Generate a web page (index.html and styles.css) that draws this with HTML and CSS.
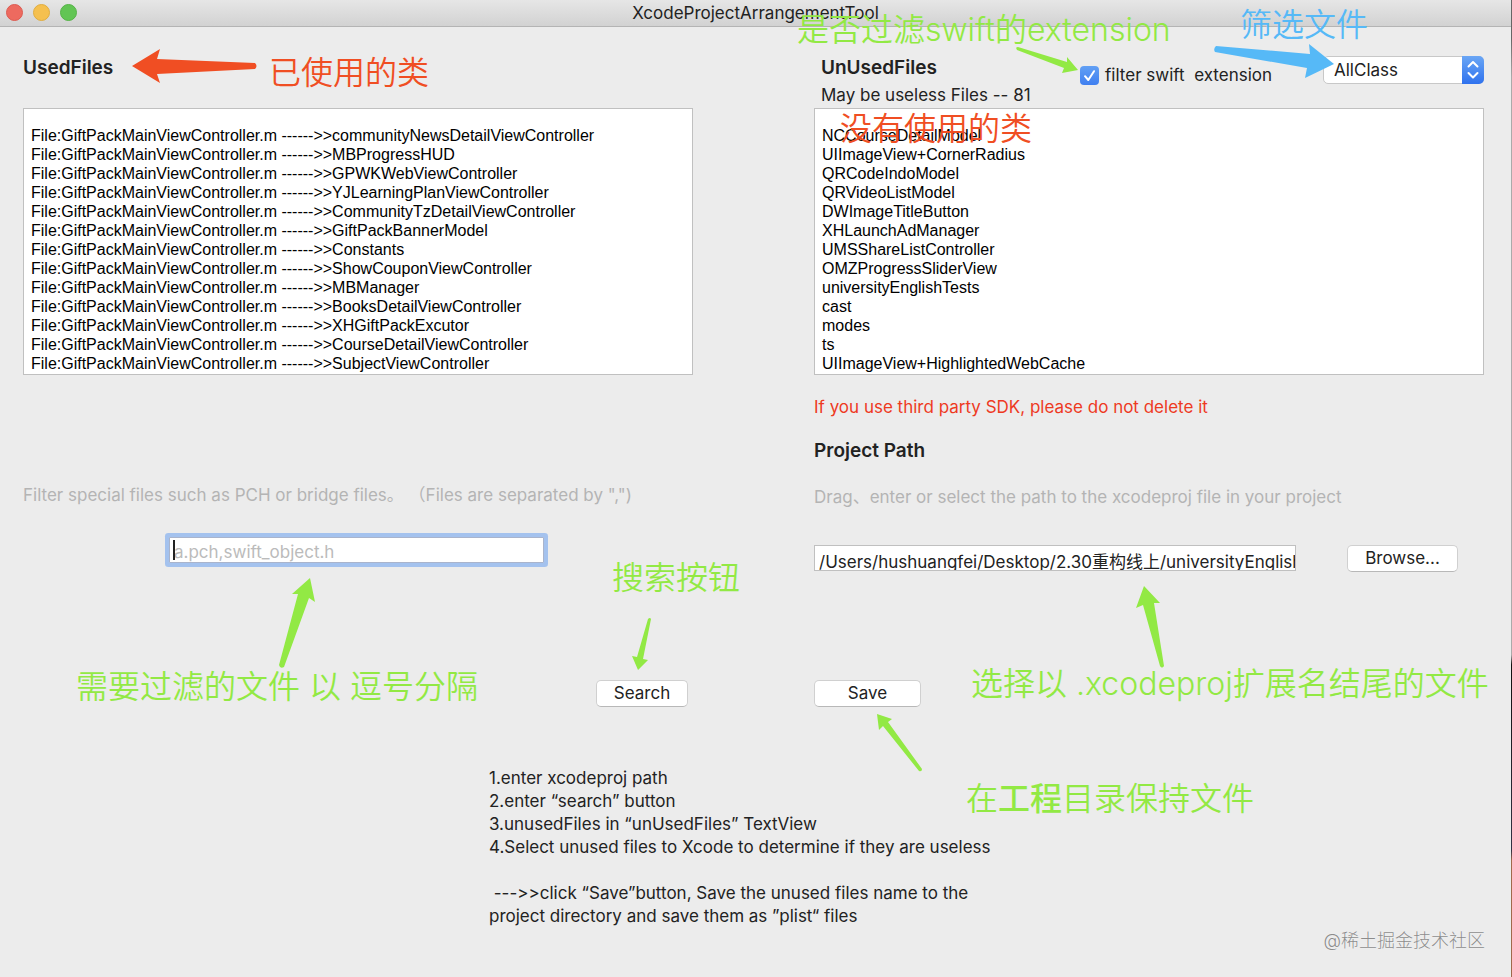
FILE: index.html
```html
<!DOCTYPE html>
<html lang="en">

<head>
  <meta charset="utf-8">
  <title>XcodeProjectArrangementTool</title>
  <link rel="stylesheet" href="styles.css">
</head>

<body>
  <div class="window">
    <header class="titlebar">
      <div class="lights">
        <span class="light close"></span>
        <span class="light minimize"></span>
        <span class="light zoom"></span>
      </div>
      <h1 class="window-title">XcodeProjectArrangementTool</h1>
    </header>

    <main>
      <div class="columns">
        <section class="column">
          <div class="column-header">
            <label class="heading" for="used">UsedFiles</label>
          </div>
          <textarea class="file-list" id="used" wrap="off" readonly>
File:GiftPackMainViewController.m ------&gt;&gt;communityNewsDetailViewController
File:GiftPackMainViewController.m ------&gt;&gt;MBProgressHUD
File:GiftPackMainViewController.m ------&gt;&gt;GPWKWebViewController
File:GiftPackMainViewController.m ------&gt;&gt;YJLearningPlanViewController
File:GiftPackMainViewController.m ------&gt;&gt;CommunityTzDetailViewController
File:GiftPackMainViewController.m ------&gt;&gt;GiftPackBannerModel
File:GiftPackMainViewController.m ------&gt;&gt;Constants
File:GiftPackMainViewController.m ------&gt;&gt;ShowCouponViewController
File:GiftPackMainViewController.m ------&gt;&gt;MBManager
File:GiftPackMainViewController.m ------&gt;&gt;BooksDetailViewController
File:GiftPackMainViewController.m ------&gt;&gt;XHGiftPackExcutor
File:GiftPackMainViewController.m ------&gt;&gt;CourseDetailViewController
File:GiftPackMainViewController.m ------&gt;&gt;SubjectViewController</textarea>

          <div class="filter">
            <label class="hint" for="filter">Filter special files such as PCH or bridge files。 （Files are separated by ",")</label>
            <div class="filter-box">
              <input class="field" type="text" id="filter" placeholder="a.pch,swift_object.h">
              <span class="caret"></span>
            </div>
          </div>
          <button class="btn search" type="button">Search</button>
        </section>

        <section class="column">
          <div class="column-header">
            <div class="titles">
              <label class="heading" for="unused">UnUsedFiles</label>
              <p class="count">May be useless Files -- 81</p>
            </div>
            <div class="check">
              <span class="check-box">
                <input type="checkbox" id="swift" checked>
                <svg viewBox="0 0 19 19"><path d="M5 10.2 L8.3 14 L14 5.2"/></svg>
              </span>
              <label for="swift">filter swift&nbsp; extension</label>
            </div>
            <div class="picker">
              <select aria-label="Class filter">
                <option>AllClass</option>
              </select>
              <svg viewBox="0 0 22 28"><path d="M6.500 10.500 L11 6 L15.500 10.500 M6.500 17 L11 21.500 L15.500 17"/></svg>
            </div>
          </div>
          <textarea class="file-list" id="unused" wrap="off" readonly>
NCCourseDetailModel
UIImageView+CornerRadius
QRCodeIndoModel
QRVideoListModel
DWImageTitleButton
XHLaunchAdManager
UMSShareListController
OMZProgressSliderView
universityEnglishTests
cast
modes
ts
UIImageView+HighlightedWebCache</textarea>

          <p class="warning">If you use third party SDK, please do not delete it</p>
          <h2 class="heading">Project Path</h2>
          <label class="hint" for="path">Drag、enter or select the path to the xcodeproj file in your project</label>
          <div class="path-row">
            <input class="field" type="text" id="path" value="/Users/hushuangfei/Desktop/2.30重构线上/universityEnglish">
            <button class="btn browse" type="button">Browse...</button>
          </div>
          <button class="btn save" type="button">Save</button>
        </section>
      </div>

      <div class="steps">
        <p>1.enter xcodeproj path</p>
        <p>2.enter “search” button</p>
        <p>3.unusedFiles in “unUsedFiles” TextView</p>
        <p>4.Select unused files to Xcode to determine if they are useless</p>
        <p class="save-note">&nbsp;---&gt;&gt;click “Save”button, Save the unused files name to the<br>project directory and save them as ”plist“ files</p>
      </div>
    </main>

    <!-- hand-drawn notes over the window -->
    <div class="notes">
      <svg class="arrows" width="1512" height="977" viewBox="0 0 1512 977">
        <g class="red">
          <path d="M132 66 L160 49 L157 59 L255 63 Q258 66 255 69 L157 74 L160 83 Z"/>
        </g>
        <g class="blue">
          <path d="M1334 64 L1309 44 L1310 54 L1216 46 Q1213 49 1215 52 L1307 68 L1305 78 Z"/>
        </g>
        <g class="green">
          <path d="M1078 70 L1067 57 L1067 62 L1018 47 Q1015 47 1017 50 L1064 68 L1062 73 Z"/>
          <path d="M310 578 L292 594 L298 594 L279 665 Q280 669 284 667 L309 598 L315 602 Z"/>
          <path d="M638 670 L648 660 L643 659 L651 619 Q650 617 648 619 L637 657 L632 656 Z"/>
          <path d="M877 714 L892 719 L888 722 L922 769 Q922 772 919 771 L883 726 L879 730 Z"/>
          <path d="M1144 586 L1136 608 L1143 605 L1160 666 Q1162 669 1164 666 L1154 603 L1160 603 Z"/>
        </g>
      </svg>
      <span class="note red used-note">已使用的类</span>
      <span class="note red unused-note">没有使用的类</span>
      <span class="note green swift-note">是否过滤swift的extension</span>
      <span class="note blue picker-note">筛选文件</span>
      <span class="note green filter-note">需要过滤的文件 以 逗号分隔</span>
      <span class="note green search-note">搜索按钮</span>
      <span class="note green path-note">选择以 .xcodeproj扩展名结尾的文件</span>
      <span class="note green save-dir-note">在<b>工程</b>目录保持文件</span>
      <span class="watermark">@稀土掘金技术社区</span>
    </div>
  </div>
</body>

</html>
```
FILE: styles.css
```css
* {
  box-sizing: border-box;
}

body {
  margin: 0;
  background: #ececec;
  color: #222;
  font-family: Inter, "Noto Sans CJK SC", sans-serif;
  font-size: 17px;
  line-height: 23px;
  /* keep ---> as plain dashes */
  font-variant-ligatures: no-contextual;
}

h1,
h2,
p {
  margin: 0;
}

.window {
  position: relative;
  min-height: 100vh;
  overflow: hidden;
  border-right: 1px solid;
  border-image: linear-gradient(#666 4%, #aaa 8%, #aaa 67%, #111 68%, #334 87%, #a0694b 88%) 1;
}

/* title bar */
.titlebar {
  position: relative;
  display: flex;
  align-items: center;
  justify-content: center;
  height: 27px;
  background: linear-gradient(#e6e6e6, #d2d2d2);
  border-bottom: 1px solid #b4b4b4;
}

.lights {
  position: absolute;
  left: 6px;
  top: 4px;
  display: flex;
  gap: 10px;
}

.light {
  width: 17px;
  height: 17px;
  border-radius: 50%;
  border: 1px solid;
}

.close {
  background: #ed6a5f;
  border-color: #dc5b51;
}

.minimize {
  background: #f5c04f;
  border-color: #e0ad40;
}

.zoom {
  background: #62c554;
  border-color: #55b347;
}

.window-title {
  font-size: 17px;
  font-weight: 400;
}

/* two columns */
.columns {
  display: grid;
  grid-template-columns: 1fr 1fr;
  gap: 121px;
  padding: 0 27px 0 23px;
}

.column {
  display: flex;
  flex-direction: column;
  min-width: 0;
}

.column-header {
  display: flex;
  align-items: flex-start;
  height: 81px;
  padding-top: 29px;
}

.heading {
  font-size: 19px;
  font-weight: 600;
  line-height: 23px;
}

.titles {
  flex: 1;
  padding-left: 7px;
}

.count {
  margin-top: 4px;
}

.file-list {
  height: 267px;
  padding: 17px 7px 0;
  border: 1px solid #c0c0c0;
  background: #fff;
  color: #000;
  font-family: "Liberation Sans", Arial, sans-serif;
  font-size: 16px;
  line-height: 19px;
  resize: none;
  overflow: hidden;
  outline: none;
}

.check {
  display: flex;
  align-items: center;
  gap: 6px;
  margin-top: 8px;
  margin-right: 51px;
}

.check-box {
  position: relative;
  width: 19px;
  height: 19px;
}

.check-box input {
  display: block;
  appearance: none;
  width: 19px;
  height: 19px;
  margin: 0;
  border-radius: 4px;
  background: linear-gradient(#62a0f4, #3f7ff0);
}

.check-box svg,
.picker svg {
  position: absolute;
  top: 0;
  right: 0;
  fill: none;
  stroke: #fff;
  stroke-width: 2;
  stroke-linecap: round;
  stroke-linejoin: round;
  pointer-events: none;
}

.picker {
  position: relative;
  width: 161px;
  height: 28px;
}

.picker svg {
  width: 22px;
  height: 28px;
  border-radius: 0 5px 5px 0;
  background: linear-gradient(#6aa6f5, #2f72ee);
}

.picker select {
  appearance: none;
  width: 100%;
  height: 28px;
  padding: 0 30px 0 10px;
  border: 1px solid #c8c8c8;
  border-radius: 5px;
  background: #fff;
  color: #222;
  font: inherit;
}

/* fields and buttons */
.hint {
  color: #b4b4b4;
}

.field {
  display: block;
  height: 26px;
  padding: 4px 0 0 4px;
  border: 1px solid #c0c0c0;
  background: #fff;
  color: #222;
  font: inherit;
  outline: none;
}

.field::placeholder {
  color: #bbb;
}

.filter {
  display: flex;
  flex-direction: column;
  margin-top: 109px;
}

.filter-box {
  position: relative;
  width: 375px;
  margin: 30px 0 0 146px;
}

.filter-box .field {
  width: 100%;
  border-color: #a9b4cc;
  box-shadow: 0 0 0 4px #a4c2ee;
  border-radius: 1px;
}

.caret {
  position: absolute;
  left: 4px;
  top: 3px;
  width: 2px;
  height: 20px;
  background: #222;
}

.btn {
  height: 27px;
  padding: 0;
  border: 1px solid #d0d0d0;
  border-bottom-color: #b8b8b8;
  border-radius: 5px;
  background: #fff;
  color: #222;
  font: inherit;
}

.search {
  align-self: flex-end;
  width: 92px;
  margin: 117px 5px 0 0;
}

.warning {
  margin-top: 21px;
  color: #ee3a1f;
}

.column h2 {
  margin: 20px 0 24px;
}

.path-row {
  display: flex;
  align-items: flex-start;
  gap: 51px;
  margin-top: 36px;
}

.path-row .field {
  flex: 1;
  min-width: 0;
}

.browse {
  width: 111px;
  margin-right: 26px;
}

.save {
  width: 107px;
  margin-top: 108px;
}

/* instructions */
.steps {
  width: 520px;
  margin: 60px auto 0 489px;
}

.save-note {
  margin-top: 23px;
}

/* notes */
.notes {
  position: absolute;
  inset: 0;
  pointer-events: none;
}

.arrows {
  position: absolute;
  left: 0;
  top: 0;
}

.red {
  color: #f04e23;
  fill: #f04e23;
}

.green {
  color: #92e944;
  fill: #92e944;
}

.blue {
  color: #56b9f7;
  fill: #56b9f7;
}

.note {
  position: absolute;
  font-size: 32px;
  font-weight: 350;
  line-height: 42px;
  white-space: nowrap;
}

.note b {
  font-weight: 500;
}

.used-note {
  left: 269px;
  top: 52px;
}

.unused-note {
  left: 840px;
  top: 108px;
}

.swift-note {
  left: 797px;
  top: 9px;
}

.picker-note {
  left: 1240px;
  top: 4px;
}

.filter-note {
  left: 76px;
  top: 666px;
}

.search-note {
  left: 612px;
  top: 557px;
}

.path-note {
  left: 971px;
  top: 663px;
}

.save-dir-note {
  left: 966px;
  top: 778px;
}

.watermark {
  position: absolute;
  right: 26px;
  bottom: 25px;
  color: #8c8c8c;
  font-size: 18px;
  font-weight: 300;
  text-shadow: 0 0 1px #fff;
}
```
